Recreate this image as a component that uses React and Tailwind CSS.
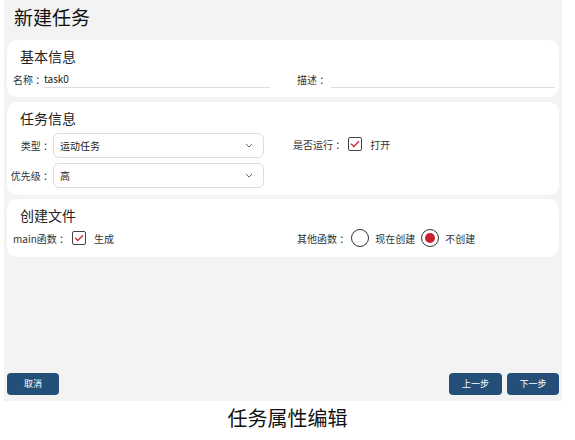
const font = { fontFamily: '"Noto Sans CJK SC", "Noto Sans", sans-serif' };

function Check() {
  return (
    <span className="flex h-[14px] w-[14px] items-center justify-center rounded-[2px] border border-[#444] bg-white">
      <svg width="10" height="8" viewBox="0 0 10 8" fill="none">
        <path d="M1 3.8 L3.8 6.5 L9 1.2" stroke="#c8303a" strokeWidth="1.4" />
      </svg>
    </span>
  );
}

function Radio({ on }) {
  return (
    <span className="flex h-[18px] w-[18px] items-center justify-center rounded-full border-[1.5px] border-[#333] bg-white">
      {on && <span className="h-[10px] w-[10px] rounded-full bg-[#c8202c]" />}
    </span>
  );
}

function Select({ value }) {
  return (
    <div className="flex h-[25px] w-[211px] items-center justify-between rounded-[6px] border border-[#dcdcdc] bg-white pl-[6px] pr-[10px] text-[10px] text-[#222]">
      <span>{value}</span>
      <svg width="8" height="5" viewBox="0 0 8 5" fill="none">
        <path d="M1 1 L4 4 L7 1" stroke="#666" strokeWidth="1" />
      </svg>
    </div>
  );
}

export default function App() {
  return (
    <div className="h-[440px] w-[575px] bg-white" style={font}>
      <div className="ml-[4px] flex h-[401px] w-[558px] flex-col bg-[#f3f3f3] px-[3px]">
        <h1 className="pl-[7px] pt-[3px] text-[19px] leading-[28px] text-[#111]">新建任务</h1>

        <section className="mt-[9px] h-[57px] rounded-[10px] bg-white">
          <h2 className="pl-[13px] pt-[6px] text-[14px] leading-[20px] text-[#222]">基本信息</h2>
          <div className="mt-[4px] flex whitespace-nowrap text-[10px] text-[#333]">
            <div className="flex w-[290px] items-center">
              <span className="w-[37px] shrink-0 pl-[6px]">名称 ：</span>
              <span className="h-[18px] w-[226px] border-b border-[#ddd] leading-[17px] text-[#222]">task0</span>
            </div>
            <div className="flex items-center">
              <span className="w-[34px] shrink-0">描述 ：</span>
              <span className="h-[18px] w-[224px] border-b border-[#ddd]" />
            </div>
          </div>
        </section>

        <section className="mt-[5px] h-[93px] rounded-[10px] bg-white">
          <h2 className="pl-[13px] pt-[6px] text-[14px] leading-[20px] text-[#222]">任务信息</h2>
          <div className="mt-[5px] flex whitespace-nowrap text-[10px] text-[#333]">
            <div className="flex w-[286px] flex-col gap-[5px]">
              <div className="flex items-center">
                <span className="w-[46px] text-right">类型 ：</span>
                <Select value="运动任务" />
              </div>
              <div className="flex items-center">
                <span className="w-[46px] text-right">优先级 ：</span>
                <Select value="高" />
              </div>
            </div>
            <div className="flex h-[22px] items-center">
              <span className="mr-[3px]">是否运行 ：</span>
              <Check />
              <span className="ml-[8px]">打开</span>
            </div>
          </div>
        </section>

        <section className="mt-[4px] h-[58px] rounded-[10px] bg-white">
          <h2 className="pl-[13px] pt-[6px] text-[14px] leading-[20px] text-[#222]">创建文件</h2>
          <div className="mt-[4px] flex whitespace-nowrap text-[10px] text-[#333]">
            <div className="flex w-[290px] items-center pl-[6px]">
              <span className="mr-[3px]">main函数 ：</span>
              <Check />
              <span className="ml-[8px]">生成</span>
            </div>
            <div className="flex items-center">
              <span className="mr-[2px]">其他函数 ：</span>
              <Radio />
              <span className="ml-[6px] mr-[6px]">现在创建</span>
              <Radio on />
              <span className="ml-[6px]">不创建</span>
            </div>
          </div>
        </section>

        <div className="mt-auto mb-[6px] flex items-center text-[9px] text-white">
          <button className="h-[22px] w-[52px] rounded-[4px] bg-[#234f78]">取消</button>
          <button className="ml-auto h-[22px] w-[53px] rounded-[4px] bg-[#234f78]">上一步</button>
          <button className="ml-[5px] h-[22px] w-[52px] rounded-[4px] bg-[#234f78]">下一步</button>
        </div>
      </div>
      <div className="pt-[1px] text-center text-[20px] leading-[32px] text-[#111]">任务属性编辑</div>
    </div>
  );
}
